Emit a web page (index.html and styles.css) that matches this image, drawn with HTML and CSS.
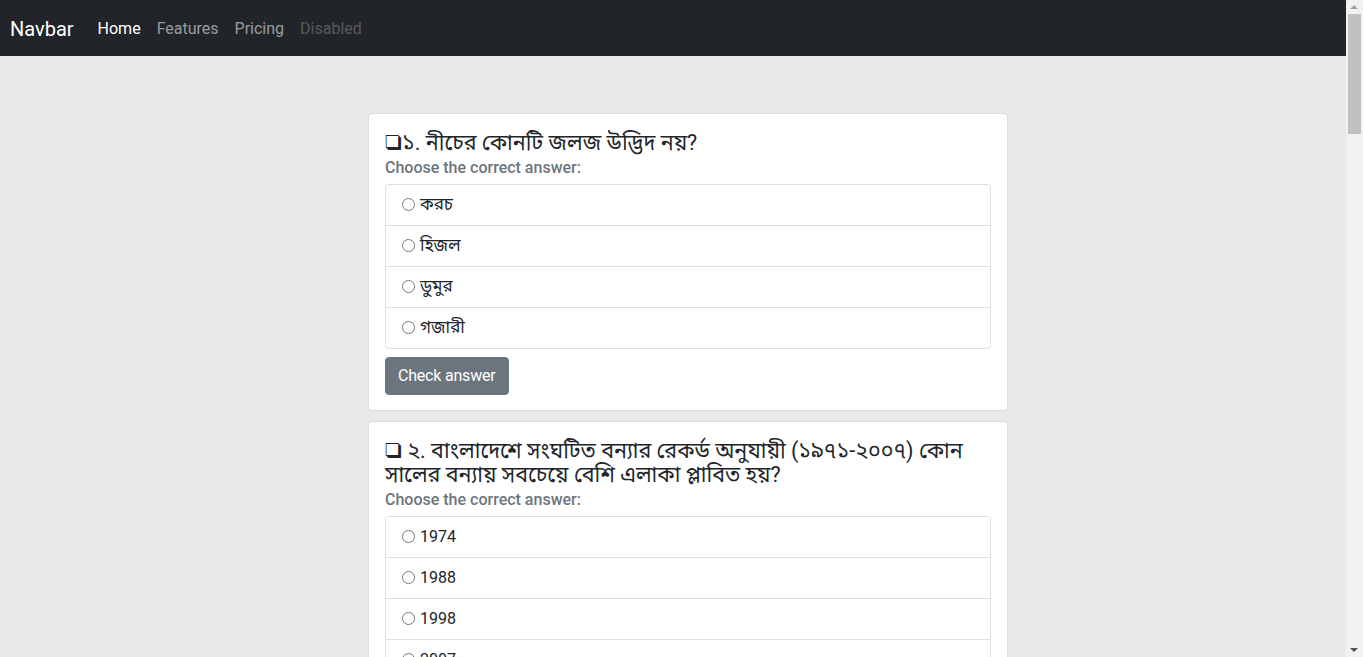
FILE: index.html
```html
<!DOCTYPE html>
<html lang="bn">
<head>
<meta charset="utf-8">
<title>Quiz</title>
<link rel="stylesheet" href="styles.css">
</head>
<body>
<nav class="navbar">
  <a class="brand" href="#">Navbar</a>
  <ul class="nav">
    <li><a class="nav-link active" href="#">Home</a></li>
    <li><a class="nav-link" href="#">Features</a></li>
    <li><a class="nav-link" href="#">Pricing</a></li>
    <li><a class="nav-link disabled" href="#">Disabled</a></li>
  </ul>
</nav>
<main class="main">
  <div class="quiz">
    <section class="card">
      <h5 class="q-title">❑১. নীচের কোনটি জলজ উদ্ভিদ নয়?</h5>
      <p class="q-sub">Choose the correct answer:</p>
      <ul class="list">
        <li class="item"><label><input type="radio" name="q1"> <span class="bn">করচ</span></label></li>
        <li class="item"><label><input type="radio" name="q1"> <span class="bn">হিজল</span></label></li>
        <li class="item"><label><input type="radio" name="q1"> <span class="bn">ডুমুর</span></label></li>
        <li class="item"><label><input type="radio" name="q1"> <span class="bn">গজারী</span></label></li>
      </ul>
      <button class="btn" type="button">Check answer</button>
    </section>
    <section class="card">
      <h5 class="q-title">❑ ২. বাংলাদেশে সংঘটিত বন্যার রেকর্ড অনুযায়ী (১৯৭১-২০০৭) কোন সালের বন্যায় সবচেয়ে বেশি এলাকা প্লাবিত হয়?</h5>
      <p class="q-sub">Choose the correct answer:</p>
      <ul class="list">
        <li class="item"><label><input type="radio" name="q2"> 1974</label></li>
        <li class="item"><label><input type="radio" name="q2"> 1988</label></li>
        <li class="item"><label><input type="radio" name="q2"> 1998</label></li>
        <li class="item"><label><input type="radio" name="q2"> 2007</label></li>
      </ul>
      <button class="btn" type="button">Check answer</button>
    </section>
  </div>
</main>
<div class="scrollbar" aria-hidden="true">
  <span class="sb-up"></span>
  <span class="sb-thumb"></span>
  <span class="sb-down"></span>
</div>
</body>
</html>
```
FILE: styles.css
```css
* { box-sizing: border-box; }
html, body { margin: 0; padding: 0; }
body {
  background: #e9e9e9;
  font-family: Roboto, "Noto Sans", "Noto Sans Bengali", sans-serif;
  font-size: 16px;
  line-height: 1.5;
  color: #212529;
}
.navbar {
  height: 56px;
  background: #212529;
  display: flex;
  align-items: center;
  padding: 1px 10px 0;
}
.brand {
  color: #fff;
  text-decoration: none;
  font-size: 20px;
  margin-right: 16px;
}
.nav {
  list-style: none;
  margin: 0;
  padding: 0;
  display: flex;
}
.nav-link {
  display: block;
  padding: 0 8px;
  color: rgba(255,255,255,.55);
  text-decoration: none;
  font-size: 16px;
}
.nav-link.active { color: #fff; }
.nav-link.disabled { color: rgba(255,255,255,.25); }
.main {
  padding-top: 57px;
  padding-bottom: 40px;
}
.quiz {
  width: 640px;
  margin-left: 368px;
  display: flex;
  flex-direction: column;
  gap: 10px;
}
.card {
  background: #fff;
  border: 1px solid rgba(0,0,0,.125);
  border-radius: 4px;
  padding: 17px 16px 15px;
}
.q-title {
  margin: 0;
  font-size: 21.5px;
  font-weight: 400;
  line-height: 24px;
}
.q-sub {
  margin: 1px 0 4px;
  color: #6c757d;
  font-weight: 500;
  line-height: 24px;
}
.list {
  list-style: none;
  margin: 0;
  padding: 0;
  border: 1px solid rgba(0,0,0,.125);
  border-radius: 4px;
}
.item {
  height: 41px;
  padding: 8px 16px;
  border-top: 1px solid rgba(0,0,0,.125);
  line-height: 24px;
}
.item:first-child { height: 40px; border-top: 0; }
.item input { margin: 0 1px 0 0; width: 13px; height: 13px; vertical-align: -1px; }
.bn { font-size: 17px; line-height: 16px; }
.btn {
  margin-top: 8px;
  background: #6c757d;
  color: #fff;
  border: 1px solid #6c757d;
  border-radius: 4px;
  padding: 6px 12px;
  font: inherit;
  letter-spacing: -0.2px;
  line-height: 24px;
}
.scrollbar {
  position: fixed;
  top: 0;
  right: 0;
  width: 17px;
  height: 100%;
  background: #f1f1f1;
}
.sb-thumb {
  position: absolute;
  top: 14px;
  left: 2px;
  width: 13px;
  height: 120px;
  background: #c1c1c1;
}
.sb-up, .sb-down {
  position: absolute;
  left: 4px;
  width: 0;
  height: 0;
  border-left: 4px solid transparent;
  border-right: 4px solid transparent;
}
.sb-up { top: 5px; border-bottom: 4px solid #a3a3a3; }
.sb-down { bottom: 5px; border-top: 4px solid #505050; }
```
